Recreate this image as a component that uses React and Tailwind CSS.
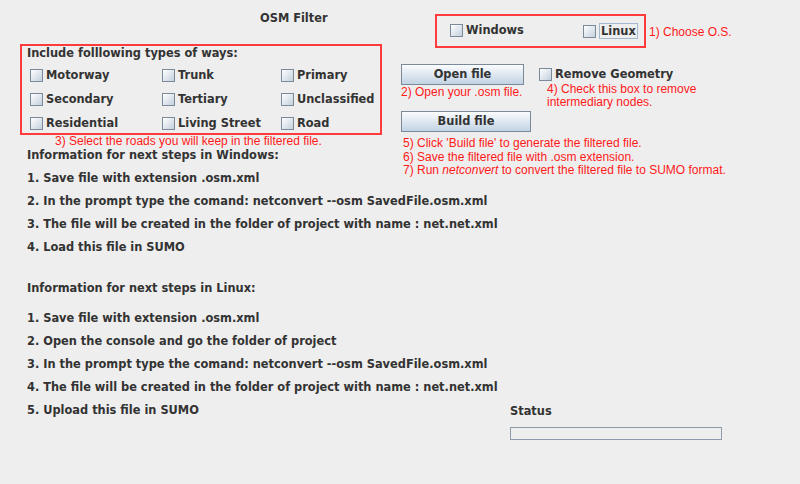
import React from "react";

const roads = [
  ["Motorway", "Trunk", "Primary"],
  ["Secondary", "Tertiary", "Unclassified"],
  ["Residential", "Living Street", "Road"],
];

const windowsSteps = [
  "1. Save file with extension .osm.xml",
  "2. In the  prompt type the comand: netconvert --osm SavedFile.osm.xml",
  "3. The file will be created in the folder of project with name : net.net.xml",
  "4. Load this file in SUMO",
];

const linuxSteps = [
  "1. Save file with extension .osm.xml",
  "2. Open the console and go the folder of project",
  "3. In the  prompt type the comand: netconvert --osm SavedFile.osm.xml",
  "4. The file will be created in the folder of project with name : net.net.xml",
  "5. Upload this file in SUMO",
];

function Box() {
  return (
    <span className="inline-block w-[13px] h-[13px] shrink-0 border border-[#7a8a99] bg-linear-to-br from-[#ffffff] to-[#c3d0dd]" />
  );
}

function Check({ label, focus }) {
  return (
    <div className="flex items-center gap-[3px] whitespace-nowrap">
      <Box />
      <span className={focus ? "border border-[#a3b8cc] px-[1px] leading-[14px]" : ""}>
        {label}
      </span>
    </div>
  );
}

function Button({ children, width }) {
  return (
    <button
      className={`${width} h-[21px] border border-[#7a8a99] bg-linear-to-b from-[#fbfcfd] to-[#c2d3e4] text-[#333333] font-bold`}
    >
      {children}
    </button>
  );
}

const red = "font-['Liberation_Sans',sans-serif] font-normal text-[12px] text-[#ff1a1a]";

export default function App() {
  return (
    <div className="w-[800px] h-[484px] bg-[#eeeeee] text-[#333333] font-['DejaVu_Sans',sans-serif] font-bold text-[11.4px] flex overflow-hidden">
      {/* left side */}
      <div className="w-[400px] shrink-0 flex flex-col">
        <div className="pt-[10px] pl-[260px] leading-[16px]">OSM Filter</div>

        <div className="mt-[18px] ml-[20px] w-[362px] h-[91px] border-2 border-[#ff3b3b]">
          <div className="pl-[5px] pt-[1px] leading-[13px]">Include folllowing types of ways:</div>
          <div className="mt-[4px] pl-[8px]">
            {roads.map((row) => (
              <div key={row[0]} className="grid grid-cols-[132px_119px_1fr] h-[24px] items-center">
                {row.map((r) => (
                  <Check key={r} label={r} />
                ))}
              </div>
            ))}
          </div>
        </div>

        <div className={`${red} pl-[55px] leading-[12px] whitespace-nowrap`}>
          3) Select the roads you will keep in the filtered file.
        </div>

        <div className="pl-[27px] whitespace-nowrap">
          <div className="mt-[1px] leading-[14px]">Information for next steps in Windows:</div>
          <div className="mt-[5px]">
            {windowsSteps.map((s) => (
              <div key={s} className="leading-[23px]">{s}</div>
            ))}
          </div>

          <div className="mt-[22px] leading-[14px]">Information for next steps in Linux:</div>
          <div className="mt-[12px]">
            {linuxSteps.map((s) => (
              <div key={s} className="leading-[23px]">{s}</div>
            ))}
          </div>
        </div>
      </div>

      {/* right side */}
      <div className="flex-1 flex flex-col pl-[1px]">
        <div className="mt-[14px] flex items-center">
          <div className="ml-[34px] w-[211px] h-[34px] border-2 border-[#ff3b3b] flex items-center pl-[13px]">
            <div className="w-[133px]">
              <Check label="Windows" />
            </div>
            <Check label="Linux" focus />
          </div>
          <span className={`${red} ml-[3px] mt-[2px]`}>1) Choose O.S.</span>
        </div>

        <div className="mt-[16px] h-[47px] flex">
          <div className="w-[138px]">
            <Button width="w-[123px]">Open file</Button>
            <div className={`${red} leading-[14px] whitespace-nowrap`}>2) Open your .osm file.</div>
          </div>
          <div>
            <div className="h-[22px] flex items-center">
              <Check label="Remove Geometry" />
            </div>
            <div className={`${red} pl-[8px] -mt-[3px] leading-[13px]`}>
              4) Check this box to remove
              <br />
              intermediary nodes.
            </div>
          </div>
        </div>

        <Button width="w-[130px]">Build file</Button>

        <div className={`${red} pl-[2px] mt-[5px] leading-[13.5px] whitespace-nowrap`}>
          <div>5) Click 'Build file' to generate the filtered file.</div>
          <div>6) Save the filtered file with .osm extension.</div>
          <div>
            7) Run <i>netconvert</i> to convert the filtered file to SUMO format.
          </div>
        </div>

        <div className="mt-auto mb-[44px] ml-[109px]">
          <div className="leading-[16px]">Status</div>
          <div className="mt-[8px] w-[212px] h-[13px] border border-[#8b9bab] bg-[#eeeeee]" />
        </div>
      </div>
    </div>
  );
}
